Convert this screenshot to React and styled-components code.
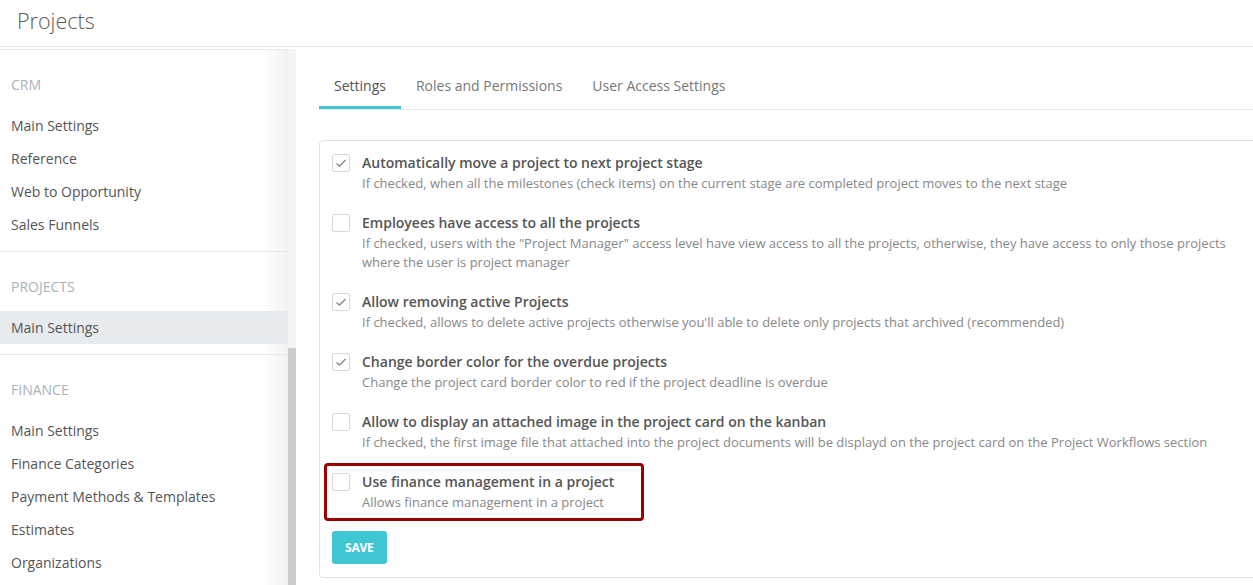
import React from "react";
import styled, { createGlobalStyle } from "styled-components";

const Global = createGlobalStyle`
  html, body { margin: 0; padding: 0; background: #fff; overflow: hidden; }
  body { font-family: "Open Sans", "Liberation Sans", sans-serif; color: #555; }
  * { box-sizing: border-box; }
`;

const Page = styled.div`
  width: 1253px;
  height: 585px;
  overflow: hidden;
  display: flex;
  flex-direction: column;
`;

const Header = styled.header`
  height: 47px;
  padding: 0 17px;
  border-bottom: 1px solid #e6eaee;
  flex-shrink: 0;
`;

const Title = styled.h1`
  margin: 0;
  font-size: 21.5px;
  font-weight: 300;
  line-height: 41px;
  color: #5a5a5a;
`;

const Body = styled.div`
  display: flex;
  flex: 1;
  margin-top: 2px;
  min-height: 0;
`;

const Sidebar = styled.nav`
  width: 288px;
  flex-shrink: 0;
  border-top: 1px solid #e8ebee;
  background: linear-gradient(to right, #fff 0, #fff calc(100% - 26px), #f3f3f3 100%);
`;

const Section = styled.div`
  padding-bottom: 10px;
  border-bottom: ${(p) => (p.$last ? "none" : "1px solid #e8e8e8")};
`;

const SectionTitle = styled.div`
  padding: 24px 11px 14px;
  font-size: 14px;
  line-height: 21px;
  color: #aab2bc;
  text-transform: uppercase;
`;

const NavItem = styled.div`
  height: 33px;
  line-height: 33px;
  padding: 0 11px;
  font-size: 14px;
  color: #555;
  background: ${(p) => (p.$active ? "#e8ebee" : "transparent")};
`;

const ScrollTrack = styled.div`
  width: 8px;
  flex-shrink: 0;
  background: #f4f4f4;
  display: flex;
  flex-direction: column;
`;

const ScrollThumb = styled.div`
  margin-top: 299px;
  flex: 1;
  background: #cbcbcb;
`;

const Main = styled.main`
  flex: 1;
  padding: 11px 0 0 23px;
  min-width: 0;
`;

const Tabs = styled.div`
  display: flex;
  border-bottom: 1px solid #e8ebee;
`;

const Tab = styled.div`
  padding: 16px 15px 10px;
  font-size: 14px;
  line-height: 20px;
  color: ${(p) => (p.$active ? "#555" : "#777")};
  border-bottom: 3px solid ${(p) => (p.$active ? "#3ec6d3" : "transparent")};
`;

const Card = styled.div`
  margin-top: 30px;
  width: calc(100% + 10px);
  border: 1px solid #e3e3e3;
  border-radius: 4px;
  padding: 11px 12px 13px;
`;

const Item = styled.div`
  position: relative;
  display: flex;
  gap: 12px;
  margin-bottom: 19px;
  max-width: 906px;

  ${(p) =>
    p.$highlight &&
    `
    &::after {
      content: "";
      position: absolute;
      left: -8px;
      top: -8px;
      bottom: -9px;
      width: 314px;
      border: 3px solid #990000;
      border-radius: 4px;
      pointer-events: none;
    }
  `}
`;

const Box = styled.span`
  width: 18px;
  height: 18px;
  margin-top: 2px;
  flex-shrink: 0;
  border: 1px solid #d8d8d8;
  border-radius: 2px;
  background: #fff;
  display: flex;
  align-items: center;
  justify-content: center;
`;

const Text = styled.div`
  display: flex;
  flex-direction: column;
  gap: 1px;
`;

const ItemTitle = styled.div`
  font-size: 14px;
  font-weight: 600;
  line-height: 21px;
  color: #555;
`;

const ItemDesc = styled.div`
  font-size: 13px;
  line-height: 19px;
  color: #888;
`;

const SaveButton = styled.button`
  height: 33px;
  padding: 0 13px;
  border: none;
  border-radius: 3px;
  background: #3ec6d3;
  color: #fff;
  font-family: "Open Sans", "Liberation Sans", sans-serif;
  font-size: 12px;
  font-weight: 700;
  letter-spacing: -0.2px;
  cursor: pointer;
`;

const Check = () => (
  <svg width="12" height="10" viewBox="0 0 12 10">
    <polyline points="1.5,5.5 4.5,8 10.5,2" fill="none" stroke="#8a8a8a" strokeWidth="1.4" />
  </svg>
);

const sections = [
  { title: "CRM", items: ["Main Settings", "Reference", "Web to Opportunity", "Sales Funnels"] },
  { title: "Projects", items: ["Main Settings"], active: 0 },
  {
    title: "Finance",
    items: ["Main Settings", "Finance Categories", "Payment Methods & Templates", "Estimates", "Organizations"],
  },
];

const settings = [
  {
    checked: true,
    title: "Automatically move a project to next project stage",
    desc: "If checked, when all the milestones (check items) on the current stage are completed project moves to the next stage",
  },
  {
    checked: false,
    title: "Employees have access to all the projects",
    desc: 'If checked, users with the "Project Manager" access level have view access to all the projects, otherwise, they have access to only those projects where the user is project manager',
  },
  {
    checked: true,
    title: "Allow removing active Projects",
    desc: "If checked, allows to delete active projects otherwise you'll able to delete only projects that archived (recommended)",
  },
  {
    checked: true,
    title: "Change border color for the overdue projects",
    desc: "Change the project card border color to red if the project deadline is overdue",
  },
  {
    checked: false,
    title: "Allow to display an attached image in the project card on the kanban",
    desc: "If checked, the first image file that attached into the project documents will be displayd on the project card on the Project Workflows section",
  },
  {
    checked: false,
    highlight: true,
    title: "Use finance management in a project",
    desc: "Allows finance management in a project",
  },
];

export default function App() {
  return (
    <Page>
      <Global />
      <Header>
        <Title>Projects</Title>
      </Header>
      <Body>
        <Sidebar>
          {sections.map((s, i) => (
            <Section key={s.title} $last={i === sections.length - 1}>
              <SectionTitle>{s.title}</SectionTitle>
              {s.items.map((it, j) => (
                <NavItem key={it} $active={s.active === j}>
                  {it}
                </NavItem>
              ))}
            </Section>
          ))}
        </Sidebar>
        <ScrollTrack>
          <ScrollThumb />
        </ScrollTrack>
        <Main>
          <Tabs>
            <Tab $active>Settings</Tab>
            <Tab>Roles and Permissions</Tab>
            <Tab>User Access Settings</Tab>
          </Tabs>
          <Card>
            {settings.map((s) => (
              <Item key={s.title} $highlight={s.highlight}>
                <Box>{s.checked && <Check />}</Box>
                <Text>
                  <ItemTitle>{s.title}</ItemTitle>
                  <ItemDesc>{s.desc}</ItemDesc>
                </Text>
              </Item>
            ))}
            <SaveButton>SAVE</SaveButton>
          </Card>
        </Main>
      </Body>
    </Page>
  );
}
